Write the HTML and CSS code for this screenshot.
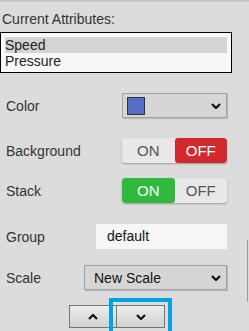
FILE: index.html
```html
<!DOCTYPE html>
<html>
  <head>
    <title>Attributes</title>
    <link rel="stylesheet" href="styles.css">
  </head>
  <body>
    <div class="panel">
      <div class="title">Current Attributes:</div>

      <div class="attr-list">
        <div class="attr-item selected">Speed</div>
        <div class="attr-item">Pressure</div>
      </div>

      <div class="row row-color">
        <label>Color</label>
        <div class="select color-select">
          <span class="swatch"></span>
          <svg class="chevron" width="10" height="6" viewBox="0 0 10 6"><polyline points="1,1 5,5 9,1" /></svg>
        </div>
      </div>

      <div class="row row-bg">
        <label>Background</label>
        <div class="toggle">
          <span class="toggle-on">ON</span>
          <span class="toggle-off active-off">OFF</span>
        </div>
      </div>

      <div class="row row-stack">
        <label>Stack</label>
        <div class="toggle">
          <span class="toggle-on active-on">ON</span>
          <span class="toggle-off">OFF</span>
        </div>
      </div>

      <div class="row row-group">
        <label>Group</label>
        <div class="text-input">default</div>
      </div>

      <div class="row row-scale">
        <label>Scale</label>
        <div class="select scale-select">
          <span>New Scale</span>
          <svg class="chevron" width="10" height="6" viewBox="0 0 10 6"><polyline points="1,1 5,5 9,1" /></svg>
        </div>
      </div>

      <div class="nav-buttons">
        <button class="nav-btn">
          <svg width="10" height="6" viewBox="0 0 10 6"><polyline points="1,5 5,1 9,5" /></svg>
        </button>
        <button class="nav-btn focused">
          <svg width="10" height="6" viewBox="0 0 10 6"><polyline points="1,1 5,5 9,1" /></svg>
        </button>
      </div>

      <div class="scroll-line"></div>
    </div>
  </body>
</html>
```

FILE: styles.css
```css
body {
  margin: 0;
  font-family: "Liberation Sans", Arial, sans-serif;
  font-size: 14px;
  color: #333;
  background: #dcdcdc;
}
.panel {
  position: relative;
  height: 331px;
  border-top: 2px solid #c6c6c6;
  box-sizing: border-box;
  overflow: hidden;
}
.title {
  margin-top: 9px;
  padding-left: 2px;
  line-height: 16px;
}
.attr-list {
  margin-top: 5px;
  width: 232px;
  height: 41px;
  box-sizing: border-box;
  border: 1px solid #000;
  background: #f8f8f8;
  padding: 4px 4px 0 4px;
  color: #222;
}
.attr-item {
  height: 16px;
  line-height: 16px;
}
.attr-item.selected {
  background: #d4d4d4;
}
.row {
  display: flex;
  align-items: center;
  justify-content: space-between;
  width: 227px;
  height: 25px;
  padding-left: 6px;
  box-sizing: border-box;
}
.row label {
  color: #333;
}
.row-color {
  margin-top: 20px;
}
.row-bg {
  margin-top: 20px;
}
.row-stack {
  margin-top: 15px;
}
.row-group {
  margin-top: 21px;
}
.row-scale {
  margin-top: 16px;
}
.select {
  display: flex;
  align-items: center;
  justify-content: space-between;
  height: 25px;
  box-sizing: border-box;
  border: 1px solid #a2a2a2;
  background: #d6d6d6;
  box-shadow: 1px 1px 1px rgba(0, 0, 0, 0.15);
  padding: 0 5px 0 4px;
}
.color-select {
  width: 105px;
}
.scale-select {
  width: 143px;
  padding-left: 9px;
  color: #111;
}
.swatch {
  width: 18px;
  height: 18px;
  box-sizing: border-box;
  background: #5470c6;
  border: 1px solid #333;
}
.chevron polyline,
.nav-btn polyline {
  fill: none;
  stroke: #111;
  stroke-width: 2.2;
}
.toggle {
  display: flex;
  width: 105px;
  height: 25px;
  border-radius: 3px;
  overflow: hidden;
  box-shadow: 0 1px 2px rgba(0, 0, 0, 0.3);
  background: #e8e8e8;
}
.toggle span {
  flex: 1;
  display: flex;
  align-items: center;
  justify-content: center;
  color: #555;
  font-size: 15px;
}
.toggle .active-off {
  background: #d1292e;
  color: #fff;
  border-radius: 3px;
}
.toggle .active-on {
  background: #2fba3e;
  color: #fff;
  border-radius: 3px;
}
.text-input {
  width: 131px;
  height: 25px;
  line-height: 25px;
  box-sizing: border-box;
  padding-left: 11px;
  background: #f6f6f6;
  color: #111;
}
.nav-buttons {
  display: flex;
  margin-top: 15px;
  padding-left: 69px;
}
.nav-btn {
  width: 48px;
  height: 23px;
  margin: 0;
  padding: 0;
  border: 1px solid #767676;
  background: linear-gradient(#ececec, #d2d2d2);
  display: flex;
  align-items: center;
  justify-content: center;
}
.nav-btn + .nav-btn {
  margin-left: -1px;
  width: 49px;
}
.nav-btn.focused {
  outline: 4px solid #00a3e6;
  outline-offset: 3px;
}
.scroll-line {
  position: absolute;
  right: 1px;
  top: 238px;
  width: 1px;
  height: 62px;
  background: #9a9a9a;
}
```
